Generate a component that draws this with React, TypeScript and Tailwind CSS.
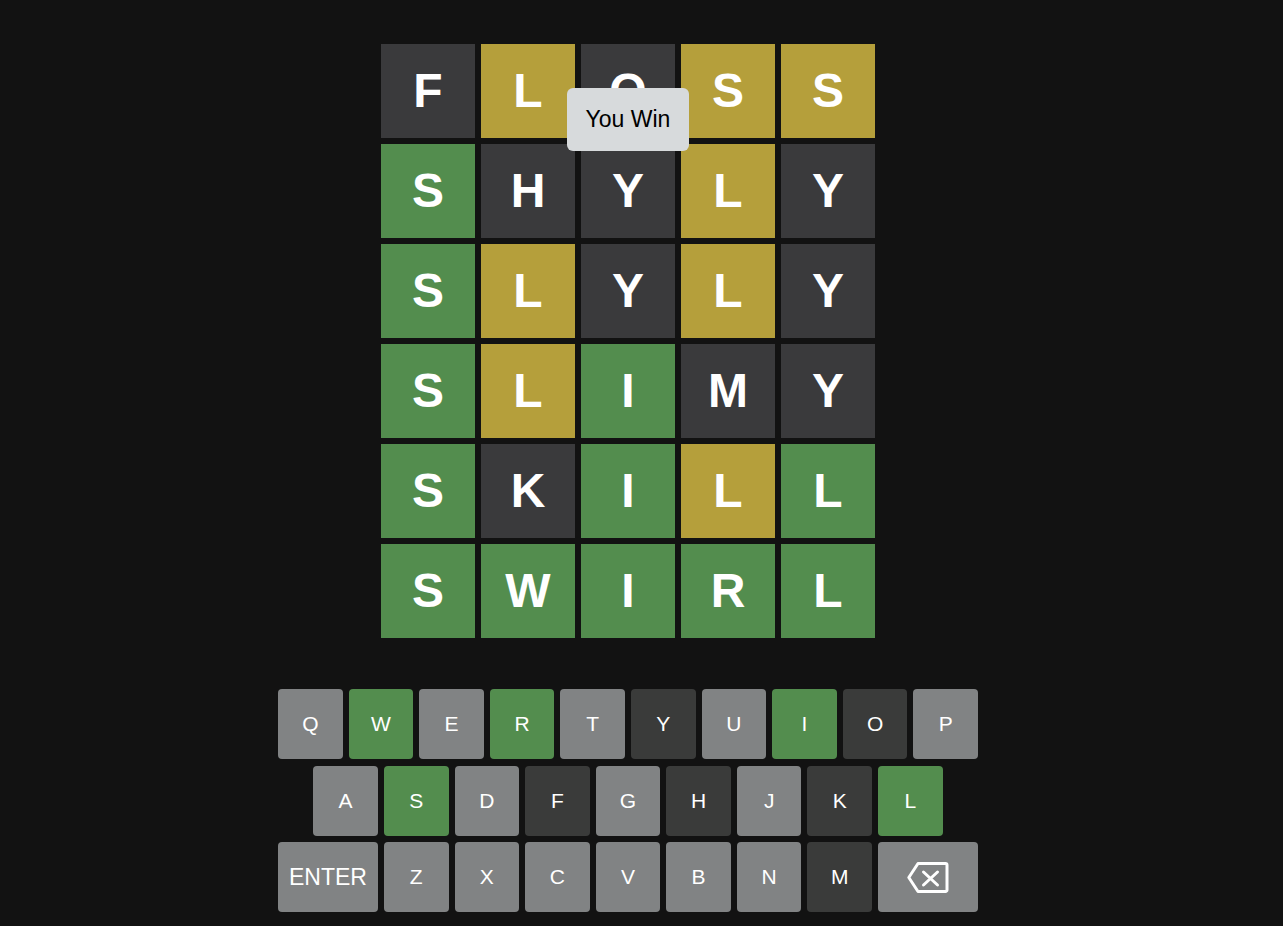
import React from "react";

type C = "g" | "y" | "d";
const rows: { w: string; c: C[] }[] = [
  { w: "FLOSS", c: ["d", "y", "d", "y", "y"] },
  { w: "SHYLY", c: ["g", "d", "d", "y", "d"] },
  { w: "SLYLY", c: ["g", "y", "d", "y", "d"] },
  { w: "SLIMY", c: ["g", "y", "g", "d", "d"] },
  { w: "SKILL", c: ["g", "d", "g", "y", "g"] },
  { w: "SWIRL", c: ["g", "g", "g", "g", "g"] },
];

const tileBg: Record<C, string> = {
  g: "bg-[#538d4e]",
  y: "bg-[#b59f3b]",
  d: "bg-[#3a3a3c]",
};

type K = "g" | "d" | "n";
const keyBg: Record<K, string> = {
  g: "bg-[#538d4e]",
  d: "bg-[#3a3b3a]",
  n: "bg-[#818384]",
};

const kb1: [string, K][] = [
  ["Q", "n"], ["W", "g"], ["E", "n"], ["R", "g"], ["T", "n"], ["Y", "d"], ["U", "n"], ["I", "g"], ["O", "d"], ["P", "n"],
];
const kb2: [string, K][] = [
  ["A", "n"], ["S", "g"], ["D", "n"], ["F", "d"], ["G", "n"], ["H", "d"], ["J", "n"], ["K", "d"], ["L", "g"],
];
const kb3: [string, K][] = [
  ["Z", "n"], ["X", "n"], ["C", "n"], ["V", "n"], ["B", "n"], ["N", "n"], ["M", "d"],
];

function Key({ l, k, wide }: { l: React.ReactNode; k: K; wide?: boolean }) {
  return (
    <div
      className={`${wide ? "w-[100px] text-[23px]" : "w-[64.6px] text-[21px]"} h-[70px] rounded-[4px] ${keyBg[k]} flex items-center justify-center text-white`}
    >
      {l}
    </div>
  );
}

function Backspace() {
  return (
    <svg width="42" height="31" viewBox="0 0 42 31" fill="none">
      <path
        d="M11 1.5 H38.5 A1.5 1.5 0 0 1 40 3 V28 A1.5 1.5 0 0 1 38.5 29.5 H11 L1.8 15.5 Z"
        stroke="white"
        strokeWidth="3"
        strokeLinejoin="round"
      />
      <path d="M16.5 10 L30.5 23 M30.5 10 L16.5 23" stroke="white" strokeWidth="3" strokeLinecap="round" />
    </svg>
  );
}

export default function App() {
  return (
    <div className="min-h-screen w-full bg-[#121212]" style={{ fontFamily: '"Liberation Sans", Arial, sans-serif' }}>
      <div className="w-[1256px] h-[926px] flex flex-col items-center pt-[44px]">
        <div className="relative flex flex-col gap-[6px]">
          {rows.map((r, i) => (
            <div key={i} className="flex gap-[6px]">
              {r.w.split("").map((ch, j) => (
                <div
                  key={j}
                  className={`w-[94px] h-[94px] ${tileBg[r.c[j]]} flex items-center justify-center text-white font-bold text-[48px]`}
                >
                  {ch}
                </div>
              ))}
            </div>
          ))}
          <div className="absolute top-[44px] left-[186px] w-[122px] h-[63px] rounded-[6px] bg-[#d7dadc] flex items-center justify-center text-black text-[23px]">
            You Win
          </div>
        </div>
        <div className="mt-[51px] w-[700px] flex flex-col gap-[6.5px]">
          <div className="flex gap-[6px] justify-center">
            {kb1.map(([l, k]) => (
              <Key key={l} l={l} k={k} />
            ))}
          </div>
          <div className="flex gap-[6px] justify-center">
            {kb2.map(([l, k]) => (
              <Key key={l} l={l} k={k} />
            ))}
          </div>
          <div className="flex gap-[6px] justify-center">
            <Key l="ENTER" k="n" wide />
            {kb3.map(([l, k]) => (
              <Key key={l} l={l} k={k} />
            ))}
            <Key l={<Backspace />} k="n" wide />
          </div>
        </div>
      </div>
    </div>
  );
}
